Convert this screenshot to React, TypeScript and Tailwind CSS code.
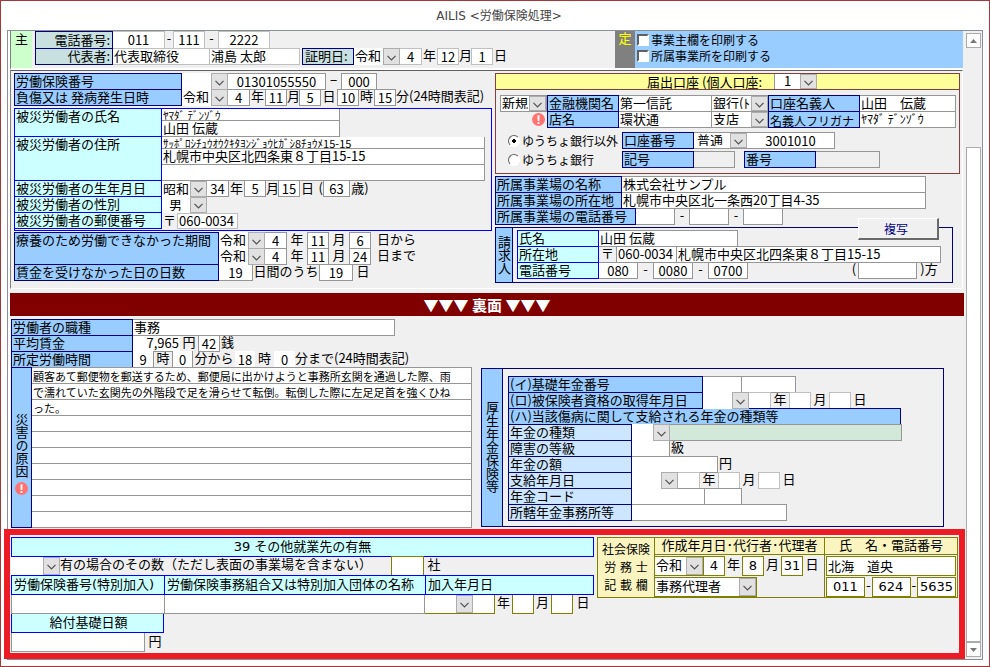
// AILIS labour insurance form: claim details (front), accident details (back)
// and the "other workplace" block framed in red at the bottom.
import type { ReactNode } from "react";
import { twMerge } from "tailwind-merge";

/** Single-line text box; width and border colour come from className. */
function Field({ label, id, value = "", className = "" }: {
  label?: string;
  id?: string;
  value?: string;
  className?: string;
}) {
  return (
    <input
      id={id}
      aria-label={label}
      defaultValue={value}
      className={twMerge(
        "h-[17px] shrink-0 rounded-none border border-[#969696] bg-white px-px pb-0.5 leading-[13px] outline-none",
        className,
      )}
    />
  );
}

/** Centred number box. */
function Num({ label, id, value, className = "" }: {
  label?: string;
  id?: string;
  value?: string;
  className?: string;
}) {
  return (
    <Field
      label={label}
      id={id}
      value={value}
      className={twMerge("w-[22px] border-l-0 px-0 pb-px text-center", className)}
    />
  );
}

/** Drop-down with the flat grey chevron button. */
function Drop({ label, id, value = "", className = "" }: {
  label?: string;
  id?: string;
  value?: string;
  className?: string;
}) {
  return (
    <span className={twMerge("relative h-[17px] w-[46px] shrink-0 bg-white", className)}>
      <select
        id={id}
        aria-label={label}
        defaultValue={value}
        className="block h-full w-full appearance-none overflow-hidden bg-transparent pr-4 pb-0.5 pl-px leading-[13px] outline-none"
      >
        <option>{value}</option>
      </select>
      <span className="pointer-events-none absolute inset-y-0 right-0 flex w-[17px] items-center justify-center border border-[#adadad] bg-[#e1e1e1]">
        <svg viewBox="0 0 9 6" className="mt-0.5 h-1.5 w-[9px]" fill="none" stroke="#505050" strokeWidth="1.2">
          <path d="M0.5 0.8 L4.5 4.8 L8.5 0.8" />
        </svg>
      </span>
    </span>
  );
}

function Lbl({ htmlFor, className = "", children }: {
  htmlFor?: string;
  className?: string;
  children: ReactNode;
}) {
  return (
    <label
      htmlFor={htmlFor}
      className={twMerge(
        "block h-[17px] shrink-0 border border-[#000080] bg-[#99ccff] pl-px leading-[13px] whitespace-nowrap",
        className,
      )}
    >
      {children}
    </label>
  );
}

function Unit({ className = "", children }: { className?: string; children: ReactNode }) {
  return (
    <span className={twMerge("w-[15px] shrink-0 text-center leading-[13px] whitespace-nowrap", className)}>
      {children}
    </span>
  );
}

function Alert() {
  return (
    <svg viewBox="0 0 14 14" className="h-[13px] w-[13px] shrink-0">
      <circle cx="7" cy="7" r="7" fill="#ff7373" />
      <rect x="6" y="2.5" width="2" height="6" fill="#fff" />
      <rect x="6" y="9.7" width="2" height="2" fill="#fff" />
    </svg>
  );
}

const aqua = "border-[#0000ff] bg-[#ccffff]";
const pale = "w-[124px] bg-[#cce6ff]";
const silver = "border-[#c0c0c0]";
const row = "flex h-4";

const cause =
  "顧客あて郵便物を郵送するため、郵便局に出かけようと事務所玄関を通過した際、雨\n" +
  "で濡れていた玄関先の外階段で足を滑らせて転倒。転倒した際に左足足首を強くひね\n" +
  "った。";

function Employer() {
  return (
    <section className="mr-0.5 flex h-[39px] border-b-2 border-l border-b-white border-l-[#808080]">
      <div className="w-[21px] shrink-0 bg-[#ccffcc] text-center leading-4">主</div>
      <div className="ml-[3px] w-[578px] shrink-0">
        <div className="flex h-[17px]">
          <Lbl htmlFor="tel1" className="h-[18px] w-[78px] bg-[#c8e0e0] pr-0.5 text-right leading-[15px]">電話番号:</Lbl>
          <Num id="tel1" value="011" className={`h-[18px] w-[52px] ${silver}`} />
          <Unit className="w-2">-</Unit>
          <Num label="電話番号 局番" value="111" className={`h-[18px] w-8 border-l ${silver}`} />
          <Unit className="w-[13px]">-</Unit>
          <Num label="電話番号 番号" value="2222" className={`h-[18px] w-[52px] border-l ${silver}`} />
        </div>
        <div className="flex h-[17px]">
          <Lbl htmlFor="rep" className="w-[78px] bg-[#c8e0e0] pr-0.5 text-right">代表者:</Lbl>
          <Field id="rep" value="代表取締役" className={`w-[97px] border-l-0 ${silver}`} />
          <Field label="代表者氏名" value="浦島 太郎" className={`w-[90px] border-l-0 ${silver}`} />
          <Lbl htmlFor="certEra" className="ml-0.5 w-[52px] bg-[#c8e0e0] pl-0.5">証明日:</Lbl>
          <Drop id="certEra" value="令和" />
          <Num label="証明年" value="4" className={silver} />
          <Unit>年</Unit>
          <Num label="証明月" value="12" className={`border-l ${silver}`} />
          <Unit className="w-3">月</Unit>
          <Num label="証明日付" value="1" className={`border-l ${silver}`} />
          <Unit>日</Unit>
        </div>
      </div>
      <div className="ml-0.5 w-[20px] shrink-0 bg-[#808080] text-center leading-[13px] text-[#ffff00]">定</div>
      <div className="flex flex-1 flex-col gap-px bg-[#99ccff] pt-px pl-0.5 text-[12px]">
        {["事業主欄を印刷する", "所属事業所を印刷する"].map((t) => (
          <label key={t} className="flex items-center gap-0.5 leading-[15px]">
            <input
              type="checkbox"
              className="h-3 w-3 appearance-none border-2 border-t-[#606060] border-r-white border-b-white border-l-[#606060] bg-white"
            />
            {t}
          </label>
        ))}
      </div>
    </section>
  );
}

function Victim() {
  const cell = "h-auto w-[147px] border-t-0 border-l-0 " + aqua;
  return (
    <div className="mt-[3px] h-[123px] border border-[#0000ff]">
      <div className="flex h-7">
        <Lbl htmlFor="name" className={cell}>被災労働者の氏名</Lbl>
        <div className="flex w-[178px] flex-col">
          <Field label="氏名フリガナ" value="ﾔﾏﾀﾞ ﾃﾞﾝｿﾞｳ" className="h-3 w-full border-t-0 border-l-0 pb-0 text-[11px] leading-[11px]" />
          <Field id="name" value="山田 伝蔵" className="h-4 w-full border-t-0 border-l-0" />
        </div>
      </div>
      <div className="flex h-11">
        <Lbl htmlFor="addr" className={cell}>被災労働者の住所</Lbl>
        <div className="flex w-[323px] flex-col">
          <Field
            label="住所フリガナ"
            value="ｻｯﾎﾟﾛｼﾁｭｳｵｳｸｷﾀﾖﾝｼﾞｮｳﾋｶﾞｼ8ﾁｮｳﾒ15-15"
            className="h-3 w-full border-t-0 border-l-0 pb-0 text-[11px] leading-[11px]"
          />
          <Field id="addr" value="札幌市中央区北四条東８丁目15-15" className="h-4 w-full border-t-0 border-l-0" />
          <Field label="住所2" className="h-4 w-full border-t-0 border-l-0" />
        </div>
      </div>
      <div className={row}>
        <Lbl htmlFor="birthEra" className={cell}>被災労働者の生年月日</Lbl>
        <Drop id="birthEra" value="昭和" className="h-4 w-[45px]" />
        <Num label="生年" value="34" className="h-4 border-t-0" />
        <Unit>年</Unit>
        <Num label="生月" value="5" className="h-4 border-t-0 border-l" />
        <Unit className="w-3">月</Unit>
        <Num label="生日" value="15" className="h-4 border-t-0 border-l" />
        <Unit>日</Unit>
        <Unit className="w-2 text-right">(</Unit>
        <Num label="年齢" value="63" className="h-4 w-[27px] border-t-0 border-l" />
        <Unit className="w-5">歳)</Unit>
      </div>
      <div className={row}>
        <Lbl htmlFor="sex" className={cell}>被災労働者の性別</Lbl>
        <Drop id="sex" value="男" className="h-4 w-[45px] pl-1.5" />
      </div>
      <div className={row}>
        <Lbl htmlFor="zip" className={cell}>被災労働者の郵便番号</Lbl>
        <Unit>〒</Unit>
        <Field id="zip" value="060-0034" className={`h-4 w-[61px] ${silver}`} />
      </div>
    </div>
  );
}

function Period({ n, year, month, day, tail }: {
  n: string;
  year: string;
  month: string;
  day: string;
  tail: string;
}) {
  return (
    <div className={row}>
      <Drop label={`${n} 元号`} value="令和" />
      <Num label={`${n} 年`} value={year} />
      <Unit className="w-5">年</Unit>
      <Num label={`${n} 月`} value={month} className="border-l" />
      <Unit className="w-5">月</Unit>
      <Num label={`${n} 日`} value={day} className="border-l" />
      <Unit className="ml-1.5 w-auto">{tail}</Unit>
    </div>
  );
}

function ClaimLeft() {
  return (
    <div className="w-[478px] shrink-0">
      <div className={row}>
        <Lbl htmlFor="insNo" className="w-[168px]">労働保険番号</Lbl>
        <Drop label="労働保険番号 区分" />
        <Num id="insNo" value="01301055550" className="w-[98px]" />
        <Unit>−</Unit>
        <Num label="労働保険番号 枝番" value="000" className="w-9 border-l" />
      </div>
      <div className={row}>
        <Lbl htmlFor="injEra" className="w-[168px]">負傷又は 発病発生日時</Lbl>
        <Drop id="injEra" value="令和" />
        <Num label="発生年" value="4" />
        <Unit>年</Unit>
        <Num label="発生月" value="11" className="border-l" />
        <Unit className="w-3">月</Unit>
        <Num label="発生日" value="5" className="border-l" />
        <Unit className="w-4">日</Unit>
        <Num label="発生時" value="10" className="border-l" />
        <Unit>時</Unit>
        <Num label="発生分" value="15" className="border-l" />
        <Unit className="w-auto">分(24時間表記)</Unit>
      </div>

      <Victim />

      <div className="mt-px flex h-8">
        <Lbl className="h-[33px] w-[205px]">療養のため労働できなかった期間</Lbl>
        <div>
          <Period n="開始" year="4" month="11" day="6" tail="日から" />
          <Period n="終了" year="4" month="11" day="24" tail="日まで" />
        </div>
      </div>
      <div className={row}>
        <Lbl htmlFor="unpaid" className="w-[205px]">賃金を受けなかった日の日数</Lbl>
        <Num id="unpaid" value="19" className="w-[34px]" />
        <Unit className="w-[66px]">日間のうち</Unit>
        <Num label="うち日数" value="19" className="w-[34px] border-l" />
        <Unit className="w-5">日</Unit>
      </div>
    </div>
  );
}

function Account() {
  return (
    <fieldset className="h-[101px] border border-[#804040]">
      <div className="flex h-4 border-b border-[#804040] bg-[#ffff99]">
        <Unit className="w-[278px] pr-3 text-right leading-[15px]">届出口座 (個人口座:</Unit>
        <Drop label="届出口座" value="1" className="h-[15px] w-[43px] border-l border-[#969696] pl-2" />
      </div>
      <div className="pt-[5px] pl-1">
        <div className={row}>
          <Drop label="登録区分" value="新規" className="w-[47px] border border-[#969696]" />
          <Lbl htmlFor="bank" className="w-[72px]">金融機関名</Lbl>
          <Field id="bank" value="第一信託" className="w-[93px] border-l-0" />
          <Drop label="金融機関種別" value="銀行(ﾄ" className="w-14 border-y border-[#969696]" />
          <Lbl htmlFor="holder" className="w-[92px]">口座名義人</Lbl>
          <Field id="holder" value="山田　伝蔵" className="w-24 border-l-0" />
        </div>
        <div className={row}>
          <span className="flex w-[47px] justify-end pt-0.5 pr-0.5"><Alert /></span>
          <Lbl htmlFor="branch" className="w-[72px]">店名</Lbl>
          <Field id="branch" value="環状通" className="w-[93px] border-l-0" />
          <Drop label="店種別" value="支店" className="w-14 border-y border-[#969696]" />
          <Lbl htmlFor="holderKana" className="w-[92px] text-[12px]">名義人フリガナ</Lbl>
          <Field id="holderKana" value="ﾔﾏﾀﾞ ﾃﾞﾝｿﾞｳ" className="w-24 border-l-0 text-[12px]" />
        </div>
        <div className="mt-[5px] flex h-[17px]">
          <BankRadio text="ゆうちょ銀行以外" checked />
          <Lbl htmlFor="acct" className="w-[72px]">口座番号</Lbl>
          <Drop label="口座種別" value="普通" className="w-[53px] border-y border-[#969696] pl-0.5" />
          <Num id="acct" value="3001010" className="w-[88px]" />
        </div>
        <div className="mt-0.5 flex h-[17px]">
          <BankRadio text="ゆうちょ銀行" />
          <Lbl htmlFor="sym" className="w-[72px]">記号</Lbl>
          <Field id="sym" className="w-[41px] border-l-0 bg-[#efefef]" />
          <Lbl htmlFor="symNo" className="ml-[9px] w-[72px]">番号</Lbl>
          <Field id="symNo" className="w-16 border-l-0 bg-[#efefef]" />
        </div>
      </div>
    </fieldset>
  );
}

function BankRadio({ text, checked = false }: { text: string; checked?: boolean }) {
  return (
    <label className="flex w-[122px] shrink-0 items-center gap-0.5 pl-2 text-[12px] leading-[15px] whitespace-nowrap">
      <input
        type="radio"
        name="bankKind"
        defaultChecked={checked}
        className="h-3 w-3 shrink-0 appearance-none rounded-full border border-t-[#606060] border-r-white border-b-white border-l-[#606060] bg-white checked:bg-[radial-gradient(circle,#000_0_2px,#fff_2px)]"
      />
      {text}
    </label>
  );
}

function ClaimRight() {
  return (
    <div className="min-w-0 flex-1">
      <Account />

      <div className="mt-0.5">
        <div className={row}>
          <Lbl htmlFor="office" className="w-[127px]">所属事業場の名称</Lbl>
          <Field id="office" value="株式会社サンプル" className="w-[304px] border-l-0" />
        </div>
        <div className={row}>
          <Lbl htmlFor="officeAddr" className="w-[127px]">所属事業場の所在地</Lbl>
          <Field id="officeAddr" value="札幌市中央区北一条西20丁目4-35" className="w-[304px] border-l-0" />
        </div>
        <div className={row}>
          <Lbl htmlFor="officeTel" className="w-[141px]">所属事業場の電話番号</Lbl>
          <Num id="officeTel" className="w-[39px]" />
          <Unit className="w-3.5">-</Unit>
          <Num label="事業場 局番" className="w-10 border-l" />
          <Unit className="w-3.5">-</Unit>
          <Num label="事業場 番号" className="w-10 border-l" />
        </div>
      </div>

      <div className="relative mt-[3px] mr-[7px] flex h-14 border border-[#000080]">
        <div className="flex w-[17px] shrink-0 items-center justify-center border-r border-[#000080] bg-[#99ccff] leading-4 [writing-mode:vertical-rl]">
          請求人
        </div>
        <div className="pt-0.5 pl-1">
          <div className={row}>
            <Lbl htmlFor="clName" className={`w-[82px] ${aqua}`}>氏名</Lbl>
            <Field id="clName" value="山田 伝蔵" className="w-[139px] border-l-0" />
          </div>
          <div className={row}>
            <Lbl htmlFor="clAddr" className={`w-[82px] ${aqua}`}>所在地</Lbl>
            <Unit className="w-[17px]">〒</Unit>
            <Field label="請求人 郵便番号" value="060-0034" className="w-[61px]" />
            <Field id="clAddr" value="札幌市中央区北四条東８丁目15-15" className="w-[264px] border-l-0" />
          </div>
          <div className={row}>
            <Lbl htmlFor="clTel" className={`w-[82px] ${aqua}`}>電話番号</Lbl>
            <Num id="clTel" value="080" className="w-[39px]" />
            <Unit>-</Unit>
            <Num label="請求人 局番" value="0080" className="w-10 border-l" />
            <Unit>-</Unit>
            <Num label="請求人 番号" value="0700" className="w-10 border-l" />
            <Unit className="ml-[102px] w-2">(</Unit>
            <Field label="方書" className="w-[59px]" />
            <Unit className="w-6">)方</Unit>
          </div>
        </div>
        <button
          type="button"
          className="absolute -top-2.5 right-[13px] h-[22px] w-[81px] border border-t-white border-r-2 border-r-[#696969] border-b-2 border-b-[#696969] border-l-white bg-[#f0f0f0] pr-1 text-[12px] leading-[17px] text-[#000080]"
        >
          複写
        </button>
      </div>
    </div>
  );
}

function Accident() {
  return (
    <div className="w-[461px] shrink-0">
      <div className={row}>
        <Lbl htmlFor="job" className="w-[122px]">労働者の職種</Lbl>
        <Field id="job" value="事務" className="w-[262px] border-l-0" />
      </div>
      <div className={row}>
        <Lbl htmlFor="wage" className="w-[122px]">平均賃金</Lbl>
        <Field id="wage" value="7,965" className="w-[47px] border-x-0 text-right" />
        <Unit className="w-[18px]">円</Unit>
        <Num label="銭" value="42" className="border-l" />
        <Unit>銭</Unit>
      </div>
      <div className={row}>
        <Lbl htmlFor="startH" className="w-[122px]">所定労働時間</Lbl>
        <Num id="startH" value="9" className="w-[21px] border-y-0" />
        <Unit className="w-[18px]">時</Unit>
        <Num label="始業分" value="0" className="w-[21px] border-y-0 border-l" />
        <Unit className="w-[42px]">分から</Unit>
        <Num label="終業時" value="18" className="w-5 border-0" />
        <Unit className="w-[19px]">時</Unit>
        <Num label="終業分" value="0" className="w-[21px] border-0" />
        <Unit className="w-auto">分まで(24時間表記)</Unit>
      </div>
      <div className="flex h-[161px]">
        <Lbl htmlFor="cause" className="flex h-full w-[21px] flex-col items-center justify-center gap-1 pt-3 pl-0">
          <span className="leading-4 [writing-mode:vertical-rl]">災害の原因</span>
          <Alert />
        </Lbl>
        <textarea
          id="cause"
          defaultValue={cause}
          className="block h-full flex-1 resize-none overflow-hidden border-t border-r border-[#969696] bg-white bg-[repeating-linear-gradient(transparent_0_15px,#969696_15px_16px)] px-px text-[11px] leading-4 whitespace-pre outline-none"
        />
      </div>
    </div>
  );
}

function Pension() {
  return (
    <div className="mr-[21px] mb-px flex h-[159px] flex-1 border border-[#000080]">
      <div className="flex w-[21px] shrink-0 items-center justify-center border-r border-[#000080] bg-[#99ccff] leading-4 [writing-mode:vertical-rl]">
        厚生年金保険等
      </div>
      <div className="pt-[7px] pl-[5px]">
        <div className={row}>
          <Lbl htmlFor="pNo" className="w-[195px]">(イ)基礎年金番号</Lbl>
          <Num id="pNo" className="w-[39px]" />
          <Num label="基礎年金番号 下" className="w-[54px]" />
        </div>
        <div className={row}>
          <Lbl htmlFor="pEra" className="w-[195px]">(ロ)被保険者資格の取得年月日</Lbl>
          <Drop id="pEra" />
          <Num label="取得年" className={silver} />
          <Unit className="w-[18px]">年</Unit>
          <Num label="取得月" className={`border-l ${silver}`} />
          <Unit className="w-[18px]">月</Unit>
          <Num label="取得日" className={`border-l ${silver}`} />
          <Unit className="w-[18px]">日</Unit>
        </div>
        <div className={row}>
          <Lbl className="w-[393px]">(ハ)当該傷病に関して支給される年金の種類等</Lbl>
        </div>
        <div className={row}>
          <Lbl htmlFor="pKind" className={pale}>年金の種類</Lbl>
          <Drop id="pKind" className="w-[38px]" />
          <Field label="年金の種類名" className="w-[232px] border-l-0 bg-[#d2e8d8]" />
        </div>
        <div className={row}>
          <Lbl htmlFor="pGrade" className={pale}>障害の等級</Lbl>
          <Num id="pGrade" className="w-[38px]" />
          <Unit>級</Unit>
        </div>
        <div className={row}>
          <Lbl htmlFor="pSum" className={pale}>年金の額</Lbl>
          <Num id="pSum" className="w-[86px]" />
          <Unit>円</Unit>
        </div>
        <div className={row}>
          <Lbl htmlFor="payEra" className={pale}>支給年月日</Lbl>
          <Drop id="payEra" />
          <Num label="支給年" className={silver} />
          <Unit className="w-[18px]">年</Unit>
          <Num label="支給月" className={`border-l ${silver}`} />
          <Unit className="w-[18px]">月</Unit>
          <Num label="支給日" className={`border-l ${silver}`} />
          <Unit className="w-[18px]">日</Unit>
        </div>
        <div className={row}>
          <Lbl htmlFor="pCode" className={pale}>年金コード</Lbl>
          <Num id="pCode" className="w-[73px]" />
          <Num label="年金コード 下" className="w-[37px]" />
        </div>
        <div className={row}>
          <Lbl htmlFor="pOffice" className={pale}>所轄年金事務所等</Lbl>
          <Num id="pOffice" className="w-[155px]" />
        </div>
      </div>
    </div>
  );
}

const head = "h-5 pl-0.5 leading-[18px] " + aqua;
const olive = "h-5 border-[#808000] leading-[18px]";

function OtherWork() {
  return (
    <div className="w-[583px] shrink-0">
      <div className="h-5 border border-[#0000ff] bg-[#ccffff] text-center leading-[18px]">39 その他就業先の有無</div>
      <div className="-mt-px flex h-5">
        <Drop label="有無" className="mt-px h-[18px] w-[49px]" />
        <label htmlFor="count" className="w-[331px] shrink-0 leading-[18px] whitespace-nowrap">
          有の場合のその数（ただし表面の事業場を含まない）
        </label>
        <Num id="count" className={`w-[33px] border-l ${olive}`} />
        <Unit className="w-5 leading-[18px]">社</Unit>
      </div>
      <div className="-mt-px flex">
        <Lbl htmlFor="spNo" className={`w-[153px] border-r-0 ${head}`}>労働保険番号(特別加入)</Lbl>
        <Lbl htmlFor="spOrg" className={`w-[261px] border-r-0 ${head}`}>労働保険事務組合又は特別加入団体の名称</Lbl>
        <Lbl htmlFor="joinEra" className={`w-[169px] ${head}`}>加入年月日</Lbl>
      </div>
      <div className="flex h-[18px]">
        <Field id="spNo" className="h-[19px] w-[153px] border-t-0 border-r-0" />
        <Field id="spOrg" className="h-[19px] w-[261px] border-t-0" />
        <Drop id="joinEra" className="h-[19px] w-12 border-b border-[#808000]" />
        <Num label="加入年" className="h-[19px] border-t-0 border-[#808000]" />
        <Unit className="w-[17px] leading-4">年</Unit>
        <Num label="加入月" className="h-[19px] border-t-0 border-l border-[#808000]" />
        <Unit className="w-[17px] leading-4">月</Unit>
        <Num label="加入日" className="h-[19px] border-t-0 border-l border-[#808000]" />
        <Unit className="w-5 leading-4">日</Unit>
      </div>
      <Lbl htmlFor="daily" className={`w-[153px] text-center ${head}`}>給付基礎日額</Lbl>
      <div className="flex">
        <Field id="daily" className="h-[19px] w-[134px] border-t-0" />
        <Unit className="w-5 leading-[18px]">円</Unit>
      </div>
    </div>
  );
}

function Consultant() {
  return (
    <div className="mr-px ml-[3px] flex h-[61px] min-w-0 flex-1 border border-[#808000]">
      <div className="flex w-[57px] shrink-0 flex-col justify-center border-r border-[#808000] bg-[#faf5c0] text-center text-[12px] leading-[18px] whitespace-pre">
        <span>社会保険</span>
        <span>労 務 士</span>
        <span>記 載 欄</span>
      </div>
      <div className="w-[170px] shrink-0 border-r border-[#808000]">
        <div className="h-[17px] border-b border-[#808000] bg-[#faf5c0] text-center leading-4 whitespace-nowrap">
          作成年月日･代行者･代理者
        </div>
        <div className="mt-px flex h-5">
          <Drop label="作成 元号" value="令和" className="h-5 w-12 border-y border-[#808000]" />
          <Num label="作成年" value="4" className={`border-l ${olive}`} />
          <Unit className="w-[17px] leading-[18px]">年</Unit>
          <Num label="作成月" value="8" className={`border-l ${olive}`} />
          <Unit className="w-[17px] leading-[18px]">月</Unit>
          <Num label="作成日" value="31" className={`border-l ${olive}`} />
          <Unit className="w-[18px] leading-[18px]">日</Unit>
        </div>
        <Drop label="代行者・代理者" value="事務代理者" className="mt-px block h-5 w-[102px] border border-l-0 border-[#808000]" />
      </div>
      <div className="min-w-0 flex-1">
        <div className="h-[17px] border-b border-[#808000] bg-[#faf5c0] text-center leading-4 whitespace-nowrap">
          氏　名・電話番号
        </div>
        <div className="mt-px h-5 px-px">
          <Field label="氏名" value="北海　道央" className={`block w-full ${olive}`} />
        </div>
        <div className="mt-px flex h-5 justify-between px-px">
          <Num label="電話 1" value="011" className={`w-[39px] border-l ${olive}`} />
          <Unit className="w-1.5 leading-[18px]">-</Unit>
          <Num label="電話 2" value="624" className={`w-[39px] border-l ${olive}`} />
          <Unit className="w-1.5 leading-[18px]">-</Unit>
          <Num label="電話 3" value="5635" className={`w-[39px] border-l ${olive}`} />
        </div>
      </div>
    </div>
  );
}

function ScrollBar() {
  const btn = "flex h-[15px] items-center justify-center border border-[#ababab] bg-white";
  return (
    <div className="flex w-[17px] shrink-0 flex-col bg-[#f0f0f0] pt-0.5 pr-px pb-0.5 pl-px">
      <button type="button" aria-label="上へ" className={btn}>
        <svg viewBox="0 0 7 4" className="h-1 w-[7px]" fill="#777"><path d="M0 4 L3.5 0 L7 4 Z" /></svg>
      </button>
      <div className="flex-[99]" />
      <div className="flex-[495] border border-[#ababab] bg-white" />
      <button type="button" aria-label="下へ" className={btn}>
        <svg viewBox="0 0 7 4" className="h-1 w-[7px]" fill="#777"><path d="M0 0 L3.5 4 L7 0 Z" /></svg>
      </button>
    </div>
  );
}

export default function App() {
  return (
    <div className="min-h-screen border border-[#a4373a] bg-white px-1.5 pb-1.5 font-['Noto_Sans_CJK_JP','Noto_Sans',sans-serif] text-[13px] text-black">
      <h1 className="h-[29px] pl-2 text-center font-['DejaVu_Sans','Noto_Sans_CJK_JP',sans-serif] text-[12px] leading-[31px] text-[#444]">
        AILIS &lt;労働保険処理&gt;
      </h1>
      <main className="flex border border-[#8a8f98]">
        <div className="min-w-0 flex-1 pl-0.5">
          <div className="bg-[#f0f0f0]">
            <Employer />
            <section className="mr-0.5 flex gap-[3px] border border-t-[#606060] border-r-white border-b-white border-l-[#808080] pt-0.5 pr-0.5 pb-[5px] pl-[3px]">
              <ClaimLeft />
              <ClaimRight />
            </section>
            <h2 className="mt-1 mr-px h-[23px] bg-[#800000] text-center text-[15px] leading-[23px] font-bold text-white">
              ▼▼▼ 裏面 ▼▼▼
            </h2>
            <section className="flex items-end gap-[9px] pt-[3px] pb-px pl-px">
              <Accident />
              <Pension />
            </section>
            <section className="-ml-1.5 flex h-[130px] items-start border-6 border-[#ed1c24] bg-[#f0f0f0] pt-0.5 pl-px font-['DejaVu_Sans','Noto_Sans_CJK_JP',sans-serif]">
              <OtherWork />
              <Consultant />
            </section>
          </div>
        </div>
        <ScrollBar />
      </main>
    </div>
  );
}
